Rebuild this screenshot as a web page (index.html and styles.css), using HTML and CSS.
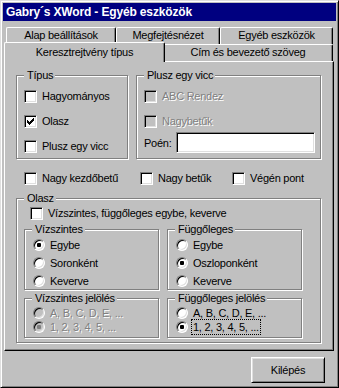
FILE: index.html
```html
<!DOCTYPE html>
<html lang="hu">
<head>
<meta charset="utf-8">
<title>Egyéb eszközök</title>
<link rel="stylesheet" href="styles.css">
</head>
<body>
<div class="window">
  <div class="titlebar">Gabry´s XWord - Egyéb eszközök</div>
  <div class="tabs">
    <div class="tabrow">
      <div class="tab w-alap">Alap beállítások</div>
      <div class="tab w-meg">Megfejtésnézet</div>
      <div class="tab w-egyeb">Egyéb eszközök</div>
    </div>
    <div class="tabrow">
      <div class="tab selected w-ker">Keresztrejtvény típus</div>
      <div class="tab w-cim">Cím és bevezető szöveg</div>
    </div>
  </div>
  <div class="panel">
    <div class="toprow">
      <div class="group g-tipus">
        <div class="legend">Típus</div>
        <div class="items">
          <div class="cb"><span class="box"></span><span>Hagyományos</span></div>
          <div class="cb"><span class="box"><svg width="11" height="11" viewBox="1 1 11 11" shape-rendering="crispEdges"><g fill="#000"><rect x="9" y="3" width="1" height="1"/><rect x="8" y="4" width="2" height="1"/><rect x="3" y="5" width="1" height="1"/><rect x="7" y="5" width="3" height="1"/><rect x="3" y="6" width="2" height="1"/><rect x="6" y="6" width="3" height="1"/><rect x="3" y="7" width="5" height="1"/><rect x="4" y="8" width="3" height="1"/><rect x="5" y="9" width="1" height="1"/></g></svg></span><span>Olasz</span></div>
          <div class="cb"><span class="box"></span><span>Plusz egy vicc</span></div>
        </div>
      </div>
      <div class="group g-plusz">
        <div class="legend">Plusz egy vicc</div>
        <div class="items">
          <div class="cb"><span class="box dis"></span><span class="distext">ABC Rendez</span></div>
          <div class="cb"><span class="box dis"></span><span class="distext">Nagybetűk</span></div>
        </div>
        <div class="poenrow">
          <span class="poenlbl">Poén:</span>
          <span class="field"></span>
        </div>
      </div>
    </div>
    <div class="checkrow">
      <div class="cb c1"><span class="box"></span><span>Nagy kezdőbetű</span></div>
      <div class="cb c2"><span class="box"></span><span>Nagy betűk</span></div>
      <div class="cb"><span class="box"></span><span>Végén pont</span></div>
    </div>
    <div class="group g-olasz">
      <div class="legend">Olasz</div>
      <div class="cb olaszcb"><span class="box"></span><span>Vízszintes, függőleges egybe, keverve</span></div>
      <div class="subgrid">
        <div class="group g-dir">
          <div class="legend">Vízszintes</div>
          <div class="rlist">
            <div class="rb"><span class="radio on"></span><span>Egybe</span></div>
            <div class="rb"><span class="radio"></span><span>Soronként</span></div>
            <div class="rb"><span class="radio"></span><span>Keverve</span></div>
          </div>
        </div>
        <div class="group g-dir">
          <div class="legend">Függőleges</div>
          <div class="rlist">
            <div class="rb"><span class="radio"></span><span>Egybe</span></div>
            <div class="rb"><span class="radio on"></span><span>Oszloponként</span></div>
            <div class="rb"><span class="radio"></span><span>Keverve</span></div>
          </div>
        </div>
        <div class="group g-jel">
          <div class="legend">Vízszintes jelölés</div>
          <div class="rlist small">
            <div class="rb"><span class="radio dis"></span><span class="distext">A, B, C, D, E, ...</span></div>
            <div class="rb"><span class="radio dis on"></span><span class="distext">1, 2, 3, 4, 5, ...</span></div>
          </div>
        </div>
        <div class="group g-jel">
          <div class="legend">Függőleges jelölés</div>
          <div class="rlist small">
            <div class="rb"><span class="radio"></span><span>A, B, C, D, E, ...</span></div>
            <div class="rb"><span class="radio on"></span><span class="focus">1, 2, 3, 4, 5, ...</span></div>
          </div>
        </div>
      </div>
    </div>
  </div>
  <div class="footer">
    <div class="button">Kilépés</div>
  </div>
</div>
</body>
</html>
```
FILE: styles.css
```css
* { box-sizing: border-box; }
html, body { margin: 0; padding: 0; }
body {
  font-family: "Liberation Sans", Arial, sans-serif;
  font-size: 11px;
  letter-spacing: -0.25px;
  color: #000;
  background: #c0c0c0;
}
.window {
  width: 339px;
  height: 388px;
  background: #c0c0c0;
  border: 1px solid;
  border-color: #dfdfdf #000 #000 #dfdfdf;
  box-shadow: inset 1px 1px #fff, inset -1px -1px #808080;
  padding: 2px;
  display: flex;
  flex-direction: column;
}
.titlebar {
  height: 18px;
  flex: none;
  background: #000080;
  color: #fff;
  font-weight: bold;
  font-size: 12px;
  letter-spacing: -0.15px;
  line-height: 18px;
  padding-left: 3px;
  white-space: nowrap;
}
.tabs { margin-top: 6px; flex: none; }
.tabrow {
  display: flex;
  height: 17px;
  padding-left: 3px;
}
.tab {
  height: 17px;
  flex: none;
  border-top: 1px solid #fff;
  border-left: 1px solid #fff;
  border-right: 1px solid #000;
  box-shadow: inset -1px 0 #808080;
  border-radius: 2px 2px 0 0;
  background: #c0c0c0;
  text-align: center;
  line-height: 15px;
  white-space: nowrap;
}
.w-alap { width: 110px; }
.w-meg { width: 104px; }
.w-egyeb { width: 113px; }
.w-ker { width: 161px; }
.w-cim { width: 170px; }
.tab.selected {
  height: 20px;
  margin: -2px -2px 0 -2px;
  line-height: 18px;
  position: relative;
  z-index: 1;
}
.panel {
  margin-left: 1px;
  width: 330px;
  height: 290px;
  flex: none;
  border: 1px solid;
  border-color: #fff #000 #000 #fff;
  box-shadow: inset -1px -1px #808080;
  padding: 0 0 0 11px;
}
.group {
  border: 1px solid #808080;
  box-shadow: inset 1px 1px #fff, 1px 1px #fff;
}
.legend {
  display: table;
  height: 13px;
  line-height: 13px;
  margin: -7px 0 0 7px;
  padding: 0 2px 0 3px;
  background: #c0c0c0;
  white-space: nowrap;
}
.toprow {
  display: flex;
  gap: 8px;
  margin-top: 13px;
}
.g-tipus { width: 112px; height: 84px; }
.g-plusz { width: 185px; height: 84px; }
.items {
  display: flex;
  flex-direction: column;
  gap: 12px;
  margin-top: 8px;
  padding-left: 7px;
}
.cb {
  display: flex;
  align-items: center;
  gap: 5px;
  height: 13px;
  line-height: 13px;
  white-space: nowrap;
}
.box {
  width: 13px;
  height: 13px;
  flex: none;
  background: #fff;
  border: 1px solid;
  border-color: #808080 #fff #fff #808080;
  box-shadow: inset 1px 1px #000, inset -1px -1px #dfdfdf;
}
.box svg { display: block; }
.box.dis { background: #c0c0c0; }
.distext {
  color: #808080;
  text-shadow: 1px 1px #fff;
}
.poenrow {
  display: flex;
  align-items: center;
  margin-top: 4px;
  padding-left: 7px;
}
.poenlbl { width: 32px; flex: none; }
.field {
  width: 139px;
  height: 21px;
  background: #fff;
  border: 1px solid;
  border-color: #808080 #fff #fff #808080;
  box-shadow: inset 1px 1px #000, inset -1px -1px #dfdfdf;
}
.checkrow {
  display: flex;
  margin-top: 13px;
  padding-left: 8px;
}
.c1 { width: 116px; }
.c2 { width: 92px; }
.g-olasz {
  width: 305px;
  height: 145px;
  margin-top: 13px;
}
.olaszcb { margin-top: 2px; margin-left: 13px; }
.subgrid {
  display: grid;
  grid-template-columns: 135px 135px;
  grid-template-rows: 61px 40px;
  gap: 8px;
  margin-top: 9px;
  margin-left: 7px;
}
.rlist {
  display: flex;
  flex-direction: column;
  padding-left: 8px;
}
.rb {
  display: flex;
  align-items: center;
  gap: 5px;
  height: 18px;
  white-space: nowrap;
}
.rlist.small { margin-top: 1px; }
.rlist.small .rb { height: 14px; }
.radio {
  width: 12px;
  height: 12px;
  flex: none;
  border-radius: 50%;
  background: #fff;
  border: 1px solid;
  border-color: #808080 #fff #fff #808080;
  box-shadow: inset 1px 1px #000, inset -1px -1px #dfdfdf;
  display: flex;
  align-items: center;
  justify-content: center;
}
.radio.dis { background: #c0c0c0; }
.radio.on::after {
  content: "";
  width: 4px;
  height: 4px;
  border-radius: 1px;
  background: #000;
}
.radio.dis.on::after { background: #808080; }
.focus {
  outline: 1px dotted #000;
  outline-offset: 1px;
}
.footer {
  display: flex;
  justify-content: flex-end;
  padding-right: 11px;
  margin-top: 6px;
}
.button {
  width: 74px;
  height: 26px;
  border: 1px solid;
  border-color: #fff #000 #000 #fff;
  box-shadow: inset 1px 1px #dfdfdf, inset -1px -1px #808080;
  display: flex;
  align-items: center;
  justify-content: center;
  line-height: 13px;
}
```
